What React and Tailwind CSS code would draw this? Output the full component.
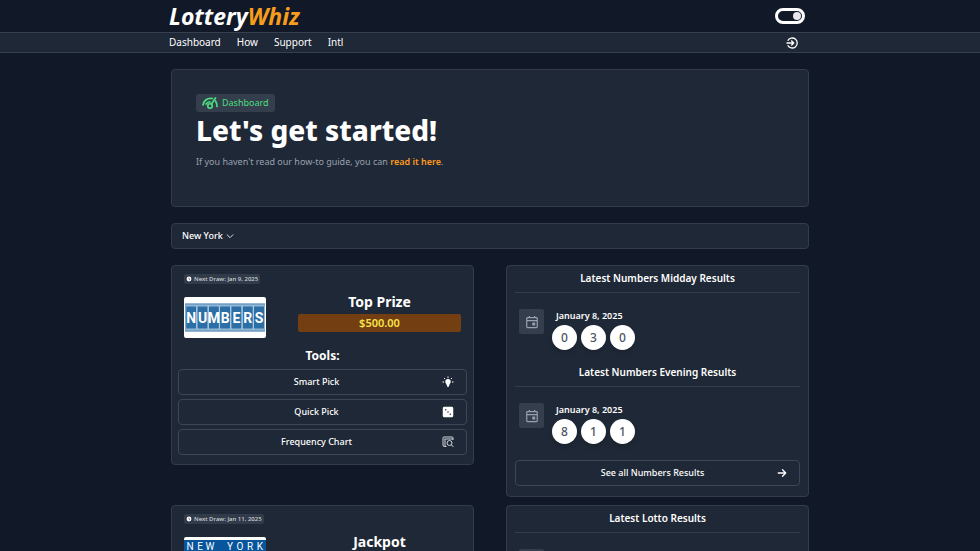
import React from "react";
import { FaDiceThree } from "react-icons/fa6";
import { HiClock, HiOutlineChevronDown } from "react-icons/hi";

function GaugeIcon() {
  return (
    <svg viewBox="0 0 32 24" className="h-3 w-4 shrink-0" fill="none" stroke="currentColor" strokeWidth="3.4" strokeLinecap="round">
      <path d="M2 16C4 7 11 2 21 3" />
      <path d="M27 8C29 11 30 14 30 19" />
      <path d="M8 14C10 11 13 9.500 16 9.500" />
      <circle cx="16" cy="18" r="4.500" />
      <path d="M19 14L27 2" />
    </svg>
  );
}

function LoginIcon() {
  return (
    <svg viewBox="0 0 24 24" className="size-3" fill="none" stroke="currentColor" strokeWidth="2.6">
      <path d="M3.500 7.500A10 10 0 1 1 3.500 16.500" />
      <path d="M1 12h14M10.500 7l5 5-5 5" />
    </svg>
  );
}

function CalendarIcon() {
  return (
    <svg viewBox="0 0 24 24" className="size-3.5" fill="none" stroke="currentColor" strokeWidth="2">
      <rect x="3" y="4.500" width="18" height="17" rx="1.500" />
      <path d="M3 9.500h18M7.500 1.500v3M16.500 1.500v3" />
      <rect x="12.500" y="13" width="5" height="5" fill="currentColor" stroke="none" />
    </svg>
  );
}

function ArrowIcon() {
  return (
    <svg viewBox="0 0 20 20" className="size-2.5" fill="none" stroke="currentColor" strokeWidth="2.600" strokeLinecap="round" strokeLinejoin="round">
      <path d="M2.500 10h15M11 3.500l6.500 6.500-6.500 6.500" />
    </svg>
  );
}

function BulbIcon() {
  return (
    <svg viewBox="0 0 24 24" className="size-3" fill="currentColor">
      <path d="M12 6a5.500 5.500 0 0 0-5.500 5.500c0 3 2.500 4 3 7L11 22h2l1.500-3.500c.5-3 3-4 3-7A5.500 5.500 0 0 0 12 6Z" />
      <path d="M12 1v3M4 4l2 2M20 4l-2 2M1 12h3M20 12h3" stroke="currentColor" strokeWidth="2" />
    </svg>
  );
}

function SearchChartIcon() {
  return (
    <svg viewBox="0 0 24 24" className="size-3 text-gray-300" fill="none" stroke="currentColor" strokeWidth="2">
      <path d="M22 8V4a2 2 0 0 0-2-2H4a2 2 0 0 0-2 2v14a3 3 0 0 0 3 3h4M5 6h17M6 6v15" />
      <circle cx="15" cy="14" r="5" />
      <path d="M19 18l4 4" />
    </svg>
  );
}

function NumbersLogo() {
  return (
    <svg viewBox="0 0 82 41" className="h-[41px] w-[82px]" role="img" aria-label="Numbers">
      <rect width="82" height="41" rx="2" fill="#fff" />
      <rect x="1" y="6.500" width="80" height="28" fill="#2c6ea6" />
      <path d="M1 8h80M1 33h80" stroke="#b9d4e8" />
      {["N", "U", "M", "B", "E", "R", "S"].map((letter, i) => (
        <g key={i}>
          <rect x={1.8 + i * 11.3} y="9" width="10.800" height="23" fill="none" stroke="#c5daea" strokeWidth="0.700" />
          <text x={7.2 + i * 11.3} y="26" textAnchor="middle" fill="#fff" fontFamily="Roboto, sans-serif" fontWeight="700" fontSize="14">
            {letter}
          </text>
        </g>
      ))}
    </svg>
  );
}

function LottoLogo() {
  return (
    <svg viewBox="0 0 82 41" className="h-[41px] w-[82px]" role="img" aria-label="New York Lotto">
      <rect width="82" height="41" rx="2" fill="#fff" />
      <rect y="3" width="82" height="35" fill="#07559b" />
      {["N", "E", "W", "", "Y", "O", "R", "K"].map((letter, i) => (
        <text key={i} x={6 + i * 10} y="13" textAnchor="middle" fill="#fff" fontFamily="Roboto, sans-serif" fontSize="10">
          {letter}
        </text>
      ))}
    </svg>
  );
}

const container = "mx-auto w-[65%] min-w-[638px]";
const card = "rounded-[4px] border border-[#323c4a] bg-[#1f2836]";
const outline = "flex h-[26px] w-full items-center rounded-[4px] border border-[#3d4653] px-3 text-[9px] font-medium";

function Tool({ label, children }) {
  return (
    <button className={outline}>
      <span className="flex-1">{label}</span>
      {children}
    </button>
  );
}

function GameCard({ date, logo, title, prize }) {
  return (
    <section className={`${card} px-1.5 pt-2 pb-[9px]`}>
      <div className="mx-1.5 flex h-2.5 w-fit items-center gap-0.5 rounded-xs bg-[#323b49] px-0.5 text-[6px] font-medium text-gray-300">
        <HiClock className="size-1.5 text-white" />
        <span>Next Draw: {date}</span>
      </div>
      <div className="mx-1.5 mt-1.5 flex items-start justify-between">
        <div className="pt-[7px]">{logo}</div>
        <div className="w-[163px] text-center">
          <h2 className="text-sm leading-6 font-bold">{title}</h2>
          <p className="h-[18px] rounded-xs bg-[#733f12] text-[11px] leading-[18px] font-semibold text-[#fbe34a]">{prize}</p>
        </div>
      </div>
      <h3 className="mt-2 mb-[3px] text-center text-xs leading-5 font-bold">Tools:</h3>
      <div className="flex flex-col gap-1">
        <Tool label="Smart Pick"><BulbIcon /></Tool>
        <Tool label="Quick Pick"><FaDiceThree className="size-3" /></Tool>
        <Tool label="Frequency Chart"><SearchChartIcon /></Tool>
      </div>
    </section>
  );
}

function Draw({ title, date, numbers }) {
  return (
    <div>
      <h2 className="border-b border-[#323c4a] pb-1 text-center text-[10px] leading-5 font-semibold">{title}</h2>
      <div className="flex gap-2 px-1 pt-4">
        <div className="flex size-[25px] items-center justify-center rounded-xs bg-[#353e4c] text-gray-400">
          <CalendarIcon />
        </div>
        <div>
          <p className="mb-0.5 pl-1 text-[9px] leading-[14px] font-semibold">{date}</p>
          <div className="flex gap-1">
            {numbers.map((n, i) => (
              <span key={i} className="flex size-[25px] items-center justify-center rounded-full bg-white text-xs font-medium text-gray-600 shadow-md">{n}</span>
            ))}
          </div>
        </div>
      </div>
    </div>
  );
}

function Results({ name, draws }) {
  return (
    <section className={`${card} flex flex-col gap-3 px-2 pt-0.5 pb-2.5`}>
      {draws.map((d) => <Draw key={d.title} {...d} />)}
      <button className={`${outline} mt-1`}>
        <span className="flex-1">See all {name} Results</span>
        <ArrowIcon />
      </button>
    </section>
  );
}

export default function App() {
  return (
    <div className="min-h-screen bg-[#111827] font-['Noto_Sans',sans-serif] text-white">
      <header>
        <div className={`${container} flex h-8 items-center justify-between`}>
          <a href="#" className="-ml-0.5 text-[23px] leading-8 font-bold italic">Lottery<span className="text-[#f79d1c]">Whiz</span></a>
          <label className="mr-1">
            <input type="checkbox" role="switch" defaultChecked aria-label="Dark mode" className="peer sr-only" />
            <span className="flex h-4 w-[30px] items-center justify-end rounded-full border-3 border-white px-px"><span className="size-2 rounded-full bg-gray-200" /></span>
          </label>
        </div>
        <nav className="border-y border-[#353f4d] bg-[#1f2836]">
          <div className={`${container} flex h-[19px] items-center gap-4 text-[10px]`}>
            <a href="#" className="-ml-0.5">Dashboard</a><a href="#">How</a><a href="#">Support</a><a href="#">Intl</a>
            <a href="#" aria-label="Log in" className="mr-[11px] ml-auto"><LoginIcon /></a>
          </div>
        </nav>
      </header>
      <main className={`${container} flex flex-col gap-4 pt-4`}>
        <section className={`${card} min-h-[138px] px-6 py-6`}>
          <span className="flex h-[18px] w-fit items-center gap-1 rounded-[3px] bg-[#353e4c] px-1.5 text-[9px] text-[#4ade80]"><GaugeIcon />Dashboard</span>
          <h1 className="text-[28px] leading-9 font-extrabold">Let's get started!</h1>
          <p className="mt-1.5 text-[9px] leading-4 text-gray-400">If you haven't read our how-to guide, you can <a href="#" className="font-semibold text-[#ff9a1f]">read it here</a>.</p>
        </section>
        <div className={`${card} h-[26px] px-2.5`}>
          <button className="flex h-full items-center gap-0.5 text-[9px] font-medium">New York <HiOutlineChevronDown className="size-2.5" /></button>
        </div>
        <div className="grid grid-cols-2 items-start gap-x-8 gap-y-2">
          <GameCard date="Jan 9, 2025" logo={<NumbersLogo />} title="Top Prize" prize="$500.00" />
          <Results name="Numbers" draws={[
            { title: "Latest Numbers Midday Results", date: "January 8, 2025", numbers: [0, 3, 0] },
            { title: "Latest Numbers Evening Results", date: "January 8, 2025", numbers: [8, 1, 1] },
          ]} />
          <GameCard date="Jan 11, 2025" logo={<LottoLogo />} title="Jackpot" prize="$2,000,000" />
          <Results name="Lotto" draws={[{ title: "Latest Lotto Results", date: "January 8, 2025", numbers: [4, 9, 17] }]} />
        </div>
      </main>
    </div>
  );
}
